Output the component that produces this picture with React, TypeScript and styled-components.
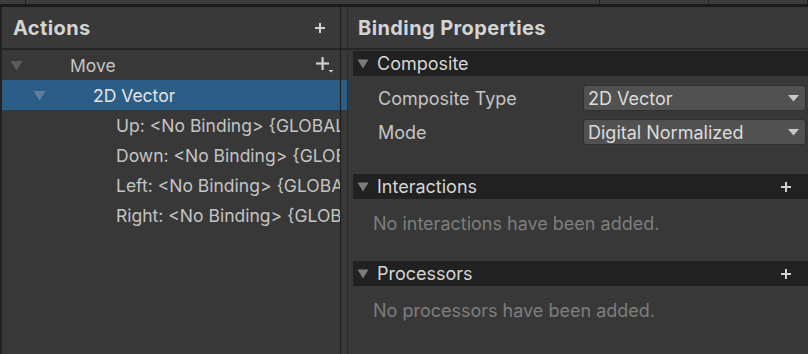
import styled, { createGlobalStyle } from 'styled-components';

const GlobalStyle = createGlobalStyle`
  html, body {
    margin: 0;
    padding: 0;
    background: #383838;
  }
  body {
    font-family: Inter, "Noto Sans", "Liberation Sans", sans-serif;
    -webkit-font-smoothing: antialiased;
  }
`;

const Window = styled.div`
  width: 808px;
  height: 354px;
  display: flex;
  flex-direction: column;
  background: #383838;
  overflow: hidden;
`;

const TabStrip = styled.div`
  display: flex;
  height: 4px;
  background: #3c3c3c;
  border-bottom: 3px solid #1b1b1b;
`;

const TabStub = styled.div<{ $w?: number }>`
  width: ${({ $w }) => ($w ? `${$w}px` : 'auto')};
  flex: ${({ $w }) => ($w ? 'none' : '1')};
  border-right: 1px solid #232323;
`;

const Main = styled.div`
  flex: 1;
  display: flex;
  border-left: 2px solid #222222;
  min-height: 0;
`;

const LeftPanel = styled.div`
  position: relative;
  width: 345px;
  display: flex;
  flex-direction: column;

  &::after {
    content: '';
    position: absolute;
    top: 0;
    bottom: 0;
    left: 338px;
    width: 1px;
    background: #1c1c1c;
  }
`;

const PanelHeader = styled.div<{ $pad: number }>`
  height: 41px;
  display: flex;
  align-items: center;
  padding: 0 0 0 ${({ $pad }) => $pad}px;
  border-bottom: 2px solid #252525;
  background: #393939;
  flex: none;
`;

const PanelTitle = styled.div`
  font-size: 20px;
  font-weight: 700;
  color: #d4d4d4;
  letter-spacing: 0.4px;
`;

const HeaderPlus = styled.div`
  margin-left: auto;
  margin-right: 22px;
  display: flex;
  align-items: center;
`;

const Tree = styled.div`
  display: flex;
  flex-direction: column;
`;

const Row = styled.div<{ $depth: number; $selected?: boolean }>`
  height: 30px;
  display: flex;
  align-items: center;
  padding: 0 7px 0 ${({ $depth }) => 8 + $depth * 23}px;
  background: ${({ $selected }) => ($selected ? '#2c5d87' : 'transparent')};
  color: ${({ $selected }) => ($selected ? '#e4e4e4' : '#c4c4c4')};
  font-size: 17.5px;
  white-space: nowrap;
`;

const ArrowSlot = styled.div`
  width: 60px;
  flex: none;
  display: flex;
  align-items: center;
`;

const RowLabel = styled.span`
  flex: 0 1 auto;
  min-width: 0;
  overflow: hidden;
`;

const RowAction = styled.div`
  margin-left: auto;
  margin-right: 6px;
  display: flex;
  align-items: flex-end;
`;

const RightPanel = styled.div`
  flex: 1;
  display: flex;
  flex-direction: column;
  border-left: 1px solid #2e2e2e;
`;

const Content = styled.div`
  display: flex;
  flex-direction: column;
  padding: 1px 0 0 5px;
`;

const Foldout = styled.div<{ $top: number }>`
  margin-top: ${({ $top }) => $top}px;
  height: 25px;
  display: flex;
  align-items: center;
  background: #212121;
  padding-left: 4px;
  color: #d6d6d6;
  font-size: 18px;
`;

const FoldoutArrow = styled.div`
  width: 20px;
  flex: none;
  display: flex;
  align-items: center;
`;

const FoldoutPlus = styled.div`
  margin-left: auto;
  margin-right: 17px;
  display: flex;
  align-items: center;
`;

const PropList = styled.div`
  display: flex;
  flex-direction: column;
  gap: 8px;
  padding: 9px 2px 0 25px;
`;

const PropRow = styled.div`
  height: 26px;
  display: flex;
  align-items: center;
`;

const PropLabel = styled.div`
  width: 205px;
  flex: none;
  color: #c4c4c4;
  font-size: 18px;
`;

const Dropdown = styled.div`
  flex: 1;
  height: 24px;
  display: flex;
  align-items: center;
  padding: 0 6px 0 4px;
  background: #515151;
  border: 1px solid #2f2f2f;
  border-radius: 3px;
  color: #dcdcdc;
  font-size: 18px;
`;

const DropdownText = styled.span`
  flex: 1;
`;

const EmptyNote = styled.div`
  padding: 14px 0 0 20px;
  color: #7e7e7e;
  font-size: 18px;
`;

const TreeTriangle = ({ color }: { color: string }) => (
  <svg width="13" height="11" viewBox="0 0 13 11">
    <polygon points="0.5,1 12.5,1 6.5,10.5" fill={color} />
  </svg>
);

const FoldTriangle = () => (
  <svg width="12" height="10" viewBox="0 0 12 10">
    <polygon points="0.5,0.5 11.5,0.5 6,9.5" fill="#7c7c7c" />
  </svg>
);

const Plus = ({ size = 10, color = '#d0d0d0' }: { size?: number; color?: string }) => (
  <svg width={size} height={size} viewBox={`0 0 ${size} ${size}`}>
    <rect x={size / 2 - 1} y="0" width="2" height={size} fill={color} />
    <rect x="0" y={size / 2 - 1} width={size} height="2" fill={color} />
  </svg>
);

const PlusMore = () => (
  <svg width="18" height="16" viewBox="0 0 18 16">
    <rect x="5.5" y="0" width="2.2" height="13" fill="#cfcfcf" />
    <rect x="0" y="5.4" width="13" height="2.2" fill="#cfcfcf" />
    <polygon points="12.5,13 17.5,13 15,15.5" fill="#cfcfcf" />
  </svg>
);

const DropArrow = () => (
  <svg width="11" height="7" viewBox="0 0 11 7">
    <polygon points="0,0 11,0 5.5,6.5" fill="#c8c8c8" />
  </svg>
);

const bindings = ['Up', 'Down', 'Left', 'Right'];

const App = () => {
  return (
    <Window>
      <GlobalStyle />
      <TabStrip>
        <TabStub $w={25} />
        <TabStub $w={573} />
        <TabStub $w={108} />
        <TabStub />
      </TabStrip>

      <Main>
        <LeftPanel>
          <PanelHeader $pad={11}>
            <PanelTitle>Actions</PanelTitle>
            <HeaderPlus>
              <Plus />
            </HeaderPlus>
          </PanelHeader>

          <Tree>
            <Row $depth={0}>
              <ArrowSlot>
                <TreeTriangle color="#5c5c5c" />
              </ArrowSlot>
              <RowLabel>Move</RowLabel>
              <RowAction>
                <PlusMore />
              </RowAction>
            </Row>
            <Row $depth={1} $selected>
              <ArrowSlot>
                <TreeTriangle color="#5f7f9c" />
              </ArrowSlot>
              <RowLabel>2D Vector</RowLabel>
            </Row>
            {bindings.map((name) => (
              <Row key={name} $depth={2}>
                <ArrowSlot />
                <RowLabel>{name}: &lt;No Binding&gt; {'{GLOBAL}'}</RowLabel>
              </Row>
            ))}
          </Tree>
        </LeftPanel>

        <RightPanel>
          <PanelHeader $pad={10}>
            <PanelTitle>Binding Properties</PanelTitle>
          </PanelHeader>

          <Content>
            <Foldout $top={0}>
              <FoldoutArrow>
                <FoldTriangle />
              </FoldoutArrow>
              Composite
            </Foldout>
            <PropList>
              <PropRow>
                <PropLabel>Composite Type</PropLabel>
                <Dropdown>
                  <DropdownText>2D Vector</DropdownText>
                  <DropArrow />
                </Dropdown>
              </PropRow>
              <PropRow>
                <PropLabel>Mode</PropLabel>
                <Dropdown>
                  <DropdownText>Digital Normalized</DropdownText>
                  <DropArrow />
                </Dropdown>
              </PropRow>
            </PropList>

            <Foldout $top={29}>
              <FoldoutArrow>
                <FoldTriangle />
              </FoldoutArrow>
              Interactions
              <FoldoutPlus>
                <Plus />
              </FoldoutPlus>
            </Foldout>
            <EmptyNote>No interactions have been added.</EmptyNote>

            <Foldout $top={27}>
              <FoldoutArrow>
                <FoldTriangle />
              </FoldoutArrow>
              Processors
              <FoldoutPlus>
                <Plus />
              </FoldoutPlus>
            </Foldout>
            <EmptyNote>No processors have been added.</EmptyNote>
          </Content>
        </RightPanel>
      </Main>
    </Window>
  );
};

export default App;
